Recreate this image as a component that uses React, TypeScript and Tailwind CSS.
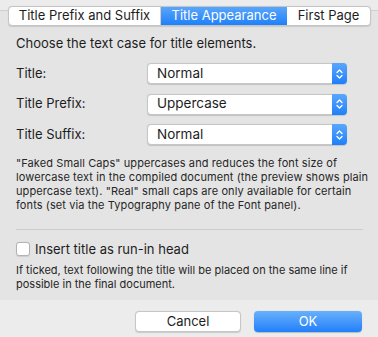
import React from "react";

const font = { fontFamily: "Inter, 'Liberation Sans', sans-serif" };

function Select({ value }: { value: string }) {
  return (
    <div className="relative flex h-[21px] w-[200px] items-center rounded-[4px] border border-[#c6c6c6] bg-white shadow-[0_0.5px_1px_rgba(0,0,0,0.15)]">
      <span className="pl-[9px] text-[13.5px] leading-none text-[#1d1d1d]">{value}</span>
      <div className="absolute right-[-1px] top-[-1px] bottom-[-1px] flex w-[15px] flex-col items-center justify-center rounded-r-[4px] bg-gradient-to-b from-[#5aa6fb] to-[#1a80fa]">
        <svg width="7" height="12" viewBox="0 0 7 12" fill="none" stroke="white" strokeWidth="1.3" strokeLinecap="round" strokeLinejoin="round">
          <path d="M1 4.5 L3.5 2 L6 4.5" />
          <path d="M1 7.5 L3.5 10 L6 7.5" />
        </svg>
      </div>
    </div>
  );
}

function Row({ label, value }: { label: string; value: string }) {
  return (
    <div className="flex h-[21px] items-center">
      <span className="w-[131px] text-[13px] text-[#1d1d1d]">{label}</span>
      <Select value={value} />
    </div>
  );
}

export default function App() {
  return (
    <div style={font} className="flex h-[337px] w-[378px] flex-col overflow-hidden bg-[#ececec] antialiased">
      <div className="h-[10px] shrink-0" />
      <div className="relative flex h-[290px] shrink-0 flex-col border-t border-[#cfcfcf] bg-[#e4e4e4] px-[16px]">
        <div className="absolute left-[8px] top-[-5px] flex h-[20px] w-[363px] overflow-hidden rounded-[4px] border border-[#c4c4c4] bg-white text-[13px] text-[#1d1d1d] shadow-[0_0.5px_1px_rgba(0,0,0,0.12)]">
          <div className="flex w-[152px] items-center justify-center border-r border-[#d0d0d0]">Title Prefix and Suffix</div>
          <div className="flex w-[126px] items-center justify-center bg-gradient-to-b from-[#58a5fb] to-[#1b80fa] text-white">Title Appearance</div>
          <div className="flex flex-1 items-center justify-center">First Page</div>
        </div>
        <div className="mt-[24px] text-[13px] leading-[16px] text-[#1d1d1d]">Choose the text case for title elements.</div>
        <div className="mt-[12px] flex flex-col gap-[9.5px]">
          <Row label="Title:" value="Normal" />
          <Row label="Title Prefix:" value="Uppercase" />
          <Row label="Title Suffix:" value="Normal" />
        </div>
        <div className="mt-[11px] whitespace-nowrap text-[11px] leading-[14px] tracking-[0.1px] text-[#262626]">
          "Faked Small Caps" uppercases and reduces the font size of<br />
          lowercase text in the compiled document (the preview shows plain<br />
          uppercase text). "Real" small caps are only available for certain<br />
          fonts (set via the Typography pane of the Font panel).
        </div>
        <div className="mt-[17px] h-px w-[347px] bg-[#cdcdcd]" />
        <div className="mt-[11px] flex items-center gap-[5px]">
          <div className="h-[14px] w-[14px] rounded-[3px] border border-[#b3b3b3] bg-white shadow-[0_0.5px_1px_rgba(0,0,0,0.1)]" />
          <span className="text-[13px] leading-[16px] text-[#1d1d1d]">Insert title as run-in head</span>
        </div>
        <div className="mt-[6px] whitespace-nowrap text-[11px] leading-[14px] text-[#262626]">
          If ticked, text following the title will be placed on the same line if<br />
          possible in the final document.
        </div>
      </div>
      <div className="flex flex-1 justify-end gap-[13px] pr-[16px] pt-[11px]">
        <button className="flex h-[21px] w-[106px] items-center justify-center rounded-[4px] border border-[#c6c6c6] bg-white text-[13px] text-[#1d1d1d] shadow-[0_0.5px_1px_rgba(0,0,0,0.15)]">Cancel</button>
        <button className="flex h-[21px] w-[108px] items-center justify-center rounded-[4px] bg-gradient-to-b from-[#67b0fb] to-[#1f7ffa] text-[13px] text-white shadow-[0_0.5px_1px_rgba(0,0,0,0.2)]">OK</button>
      </div>
    </div>
  );
}
